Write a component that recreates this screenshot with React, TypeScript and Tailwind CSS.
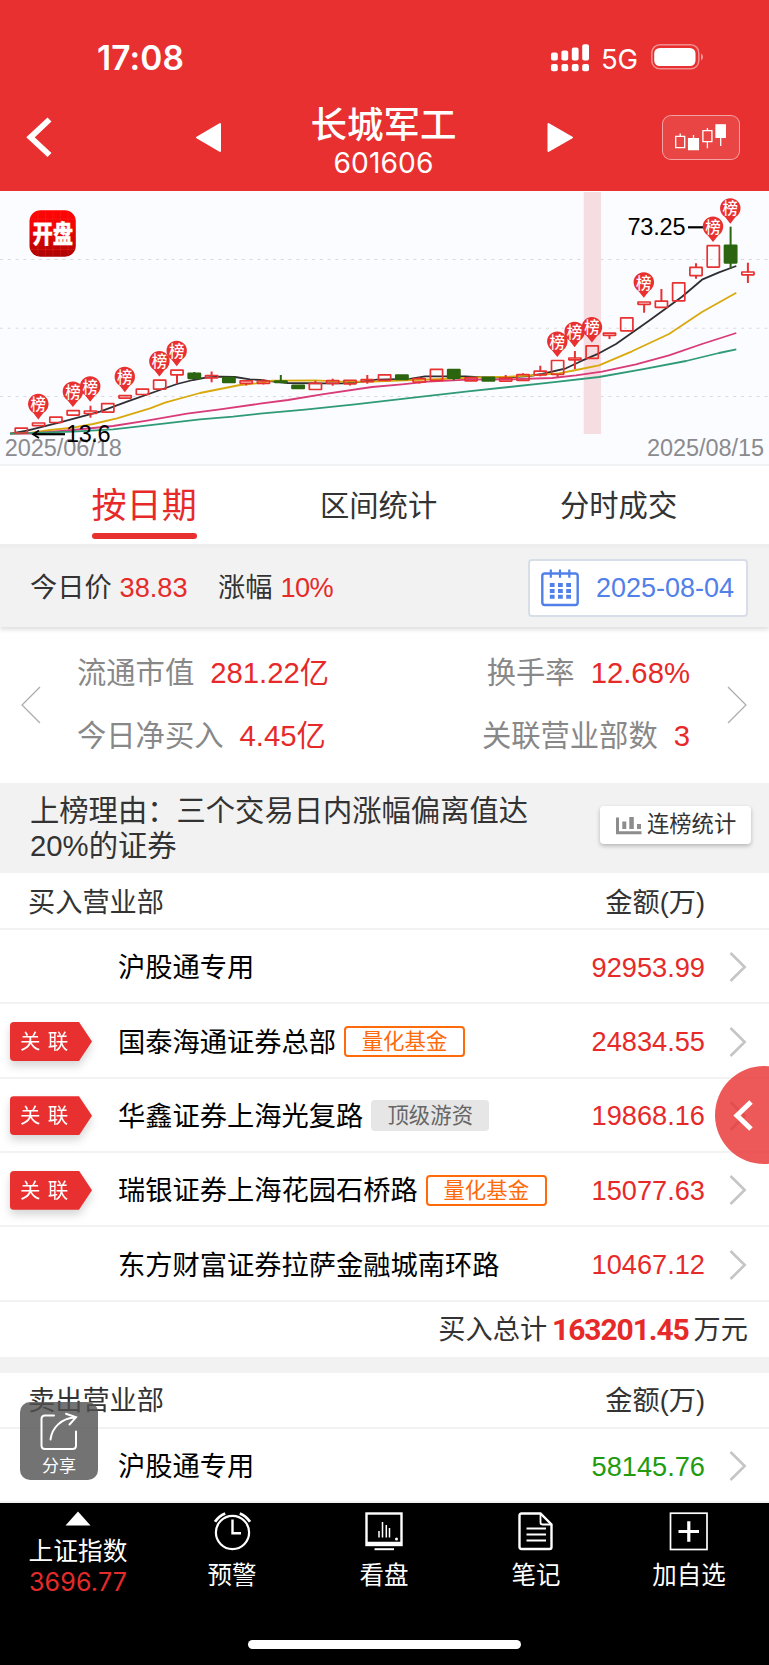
import React from 'react';

type Candle = { k: 'r' | 'g'; t: number; b: number; hi?: number; lo?: number };

const candleX = (i: number) => 21.3 + 17.3 * i;

const CANDLES: Candle[] = [
  { k: 'r', t: 427.5, b: 433.7 },
  { k: 'r', t: 422.3, b: 426.3 },
  { k: 'r', t: 416.5, b: 423.2 },
  { k: 'r', t: 410, b: 415.8 },
  { k: 'r', t: 410.3, b: 414.2, hi: 405.7, lo: 417.7 },
  { k: 'r', t: 403, b: 412.8 },
  { k: 'r', t: 395, b: 398.8 },
  { k: 'r', t: 388.5, b: 395.2 },
  { k: 'r', t: 379.5, b: 389.8 },
  { k: 'r', t: 369.5, b: 375.5, lo: 383.5 },
  { k: 'g', t: 372.7, b: 379, hi: 372 },
  { k: 'r', t: 374.8, b: 378.5, hi: 371.5, lo: 382.3 },
  { k: 'g', t: 377, b: 383.2 },
  { k: 'r', t: 380.2, b: 384, lo: 385.5 },
  { k: 'r', t: 380.3, b: 384, hi: 379, lo: 384.5 },
  { k: 'g', t: 380.3, b: 383, hi: 375 },
  { k: 'g', t: 384.7, b: 389.2 },
  { k: 'r', t: 382.6, b: 390.2, hi: 380.8 },
  { k: 'r', t: 380, b: 384, hi: 378.7, lo: 385.7 },
  { k: 'r', t: 379.7, b: 384.5, lo: 385.5 },
  { k: 'r', t: 378.8, b: 382.3, hi: 375, lo: 383.7 },
  { k: 'r', t: 374.2, b: 381 },
  { k: 'g', t: 374.3, b: 380 },
  { k: 'r', t: 378, b: 382.7, hi: 377.3, lo: 383.5 },
  { k: 'r', t: 368.6, b: 381 },
  { k: 'g', t: 369, b: 378.8, lo: 380.2 },
  { k: 'r', t: 377.2, b: 381.5 },
  { k: 'g', t: 376.7, b: 381.7 },
  { k: 'r', t: 377.5, b: 381.8, hi: 375 },
  { k: 'r', t: 374, b: 381, hi: 373.3 },
  { k: 'r', t: 370.5, b: 375.5, hi: 365.7, lo: 376.3 },
  { k: 'r', t: 359.8, b: 375, lo: 377 },
  { k: 'r', t: 357.3, b: 360.5, hi: 351, lo: 369 },
  { k: 'r', t: 345.2, b: 359 },
  { k: 'r', t: 332.5, b: 336, lo: 339 },
  { k: 'r', t: 317.2, b: 331.5 },
  { k: 'r', t: 301.3, b: 305, lo: 312.7 },
  { k: 'r', t: 300.5, b: 308, hi: 289 },
  { k: 'r', t: 282.2, b: 301.5 },
  { k: 'r', t: 266.6, b: 276.3, hi: 263.3, lo: 278.7 },
  { k: 'r', t: 245, b: 267.8 },
  { k: 'g', t: 244.7, b: 263.5, hi: 226.7, lo: 268.5 },
  { k: 'r', t: 271.3, b: 275.5, hi: 262.7, lo: 283 },
];

const PINS: [number, number][] = [
  [1, 404.6], [3, 392.2], [4, 387], [6, 377.4], [8, 361.8], [9, 351.4],
  [31, 342.2], [32, 332.4], [33, 327.8], [36, 283], [40, 227.2], [41, 208.9],
];

const MA5 =
  '10,433.7 27,430.7 60,422.3 100,411.7 127,401.7 160,390 177,384 193,380 207,377.3 220,376.7 235,377 250,379.3 260,380 272,381.3 288,383 322,383.3 342,383.3 355,382.3 377,379.7 410,379 425,376.3 445,376.3 465,376.3 488,377.7 509,377.3 529,376 542,374 566,368.3 582,360.7 599,353.3 616,344 649,320.7 682,296.7 702,279.7 719,272.3 736.3,266';
const MA10 =
  '10,433.7 30,433 50,430 73,427.7 93,424 117,418.3 150,408.3 165,402.7 200,393 240,385 260,383 272,380.7 315,380.3 342,381.7 372,381.7 405,380.3 442,379 472,377.7 509,376.7 529,375.7 559,373.3 576,370 599,365.3 632,351.3 669,334 702,312 736.3,292.7';
const MA20 =
  '10,433.7 30,433.7 73,430 113,426 147,420.7 187,413.7 220,409.3 260,403.7 288,400 322,394.3 372,387 402,384.3 428,381.7 468,379.7 509,379.3 552,378 576,375.3 602,371.7 636,364.3 669,355.3 702,344 736.3,333';
const MA30 =
  '10,433.7 73,431.7 113,429.3 157,424.3 200,419.3 233,416.7 260,413.7 305,409.7 355,404.3 422,396.7 468,391.3 509,387 552,382.3 599,377 642,369.3 686,361 719,353 736.3,349.3';

function CandleMark({ c, i }: { c: Candle; i: number }) {
  const x = candleX(i);
  const color = c.k === 'r' ? '#e83131' : '#2b650f';
  return (
    <g stroke={color} strokeWidth={2}>
      {c.hi !== undefined && <line x1={x} x2={x} y1={c.hi} y2={c.t + 1} />}
      {c.lo !== undefined && <line x1={x} x2={x} y1={c.b - 1} y2={c.lo} />}
      <rect
        x={x - 6.1}
        y={c.t + 0.7}
        width={12.2}
        height={Math.max(c.b - c.t - 1.4, 0.6)}
        strokeWidth={1.7}
        rx={0.3}
        fill={c.k === 'g' ? color : 'none'}
      />
    </g>
  );
}

function Chart() {
  return (
    <svg viewBox="0 191 769 273" width="769" height="273" className="block bg-[#fbfcff]">
      <defs>
        <linearGradient id="logo" x1="0" y1="0" x2="0" y2="1">
          <stop offset="0" stopColor="#ff0505" />
          <stop offset="0.35" stopColor="#f20505" />
          <stop offset="1" stopColor="#ac0303" />
        </linearGradient>
      </defs>
      <g stroke="#d9dade" strokeWidth="1" strokeDasharray="3 4.8">
        <line x1="0" x2="769" y1="259.5" y2="259.5" />
        <line x1="0" x2="769" y1="328.2" y2="328.2" />
        <line x1="0" x2="769" y1="396.5" y2="396.5" />
      </g>
      <rect x="583.7" y="192" width="17.3" height="242" fill="#f6dde2" />
      <g fontFamily="Liberation Sans, Arial, sans-serif" fontSize="23.5" fill="#8b8b8e">
        <text x="4.8" y="456" textLength="117">2025/06/18</text>
        <text x="647" y="456" textLength="117">2025/08/15</text>
      </g>
      <g fill="none" strokeWidth="1.8" strokeLinejoin="round">
        <polyline points={MA5} stroke="#2f2f33" />
        <polyline points={MA10} stroke="#d9a90c" />
        <polyline points={MA20} stroke="#d93a78" />
        <polyline points={MA30} stroke="#2f9a76" />
      </g>
      {CANDLES.map((c, i) => (
        <CandleMark key={i} c={c} i={i} />
      ))}
      <g fontFamily="Liberation Sans, Arial, sans-serif" fontSize="23.5" fill="#000">
        <text x="66" y="442" textLength="44.5">13.6</text>
        <text x="627.5" y="235" textLength="58">73.25</text>
      </g>
      <g stroke="#000" strokeWidth="2.2" fill="none">
        <line x1="34" x2="65" y1="434.2" y2="434.2" />
        <line x1="688" x2="704" y1="227.3" y2="227.3" />
        <path d="M39 430.5 L33 434.2 L39 438" strokeWidth="1.8" />
      </g>
      {PINS.map(([i, y]) => (
        <g key={i}>
          <path
            d={`M${candleX(i) - 0.3} ${y + 14.8} L${candleX(i) - 5.5} ${y + 8.2} A10.2 10.2 0 1 1 ${candleX(i) + 4.9} ${y + 8.2} Z`}
            fill="#e83030"
          />
          <text
            x={candleX(i) - 0.3}
            y={y + 5.5}
            fontSize="15.5"
            fontWeight="500"
            textAnchor="middle"
            fill="#fff"
            fontFamily="Noto Sans CJK SC, sans-serif"
          >
            榜
          </text>
        </g>
      ))}
      <rect x="29.5" y="210.3" width="46.3" height="46.5" rx="11" fill="url(#logo)" />
      <g stroke="#ff5a4a" strokeOpacity="0.22" strokeWidth="0.8">
        <path d="M38 211V256M45.5 211V256M53 211V256M60.5 211V256M68 211V256M30 219H75.5M30 249.5H75.5" />
      </g>
      <text
        transform="translate(52.7 243.3) scale(0.83 1)"
        fontSize="24.5"
        fontWeight="900"
        textAnchor="middle"
        fill="#fff"
        stroke="#fff"
        strokeWidth="0.3"
        fontFamily="Noto Sans CJK SC, sans-serif"
      >
        开盘
      </text>
    </svg>
  );
}

function StatusBar() {
  return (
    <div className="flex h-[95px] items-start pl-[97px] pt-[37px] text-white">
      <span className="w-[454px] pt-[1px] font-['Inter'] text-[33.5px] leading-[40px] font-semibold tracking-[0.1px]">17:08</span>
      <svg width="38" height="28" viewBox="0 0 38 28" fill="#fff" className="mt-[6.5px]">
        <rect x="0" y="8.5" width="6.8" height="8" rx="2" />
        <rect x="10.4" y="6.5" width="6.8" height="10" rx="2" />
        <rect x="20.8" y="3.5" width="6.8" height="13" rx="2" />
        <rect x="31.2" y="0.3" width="6.8" height="16.2" rx="2" />
        <rect x="0" y="20" width="6.8" height="7.2" rx="2" />
        <rect x="10.4" y="20" width="6.8" height="7.2" rx="2" />
        <rect x="20.8" y="20" width="6.8" height="7.2" rx="2" />
        <rect x="31.2" y="20" width="6.8" height="7.2" rx="2" />
      </svg>
      <span className="ml-[12px] w-[50px] pt-px font-['Inter'] text-[27.5px] leading-[43px] tracking-[-0.2px]">5G</span>
      <svg width="54" height="26" viewBox="0 0 54 26" className="mt-[7px]">
        <rect x="0.8" y="0.8" width="47" height="24" rx="8" fill="none" stroke="#fff" strokeOpacity="0.45" strokeWidth="1.5" />
        <rect x="3.2" y="4" width="41.3" height="18" rx="5.5" fill="#fff" />
        <path d="M50 9.5a4 4 0 0 1 0 7z" fill="#fff" fillOpacity="0.5" />
      </svg>
    </div>
  );
}

function NavBar() {
  return (
    <div className="flex h-[96px] items-start text-white">
      <svg width="311" height="80" viewBox="0 95 311 80">
        <path d="M49.5 119.5 L30.5 137.3 L49.5 155" fill="none" stroke="#fff" strokeWidth="5.8" />
        <path d="M197 137.5 L220 124 V151 Z" fill="#fff" stroke="#fff" strokeWidth="2" strokeLinejoin="round" />
      </svg>
      <div className="flex w-[145px] flex-col items-center pt-[7px]">
        <h1 className="text-[36.5px] leading-[48px] font-medium whitespace-nowrap">长城军工</h1>
        <span className="mt-[-1px] font-['Inter'] text-[28.2px] leading-[28px] tracking-[0.1px]">601606</span>
      </div>
      <svg width="205" height="80" viewBox="456 95 205 80">
        <path d="M572 137.500 L548.5 124 V151 Z" fill="#fff" stroke="#fff" strokeWidth="2" strokeLinejoin="round" />
      </svg>
      <div className="mt-[20px] ml-[1px] h-[45px] w-[77.5px] rounded-[9px] border border-white/50 bg-white/10">
        <svg width="75" height="43" viewBox="663 116 75 43" fill="none" stroke="#fff" strokeWidth="1.3">
          <path d="M675.7 136.3h9v11.3h-9zM680.2 133.5v2.8" />
          <path d="M688.6 138.6h9.8v11h-9.8z" fill="#fff" />
          <path d="M693.5 135v4" />
          <path d="M702.9 130.6h9v11h-9zM707.4 128v2.6M707.4 141.6v6.6" />
          <path d="M716 124.8h9.3v12.5h-9.3z" fill="#fff" />
          <path d="M720.7 137v9" />
        </svg>
      </div>
    </div>
  );
}

function Tabs() {
  return (
    <div className="flex h-[78px] items-start bg-white text-[#333]">
      <div className="ml-[91.5px] flex h-[73px] w-[105.5px] flex-col justify-between">
        <span className="h-[60px] text-[35.1px] leading-[79px] whitespace-nowrap text-[#e62a2a]">按日期</span>
        <span className="h-[6px] rounded-full bg-[#e83030]" />
      </div>
      <span className="ml-[123px] w-[240px] text-[29.3px] leading-[79px]">区间统计</span>
      <span className="text-[29.3px] leading-[79px]">分时成交</span>
    </div>
  );
}

function DateBox() {
  return (
    <div className="flex h-[58px] w-[220px] items-center rounded-[4px] border-2 border-[#d8dee8] bg-white pl-[11px] text-[#5280e9]">
      <svg width="38" height="38" viewBox="0 0 38 38" fill="none" stroke="currentColor">
        <rect x="1.3" y="4.5" width="35.4" height="31.5" rx="2.5" strokeWidth="2.4" />
        <path d="M9.8 0.5v8.2M19 0.5v8.2M28.3 0.5v8.2" strokeWidth="2.2" />
        <path d="M8.8 16.1h21.5M8.8 21.9h21.5M8.8 27.7h21.5" strokeWidth="4" strokeDasharray="4.8 3.4" />
      </svg>
      <span className="ml-[17px] pt-[1px] text-[27px] leading-[50px]">2025-08-04</span>
    </div>
  );
}

function PriceBar() {
  return (
    <div className="relative flex h-[83px] items-center justify-between border-t-4 border-[#eeeeee] bg-[#f2f2f2] pr-[21px] pl-[30px] text-[27.2px] text-[#333] shadow-[0_3px_4px_rgba(0,0,0,0.12)]">
      <div className="flex pt-[2px]">
        <span>今日价</span>
        <span className="ml-[8px] w-[98.5px] text-[#e62a2a]">38.83</span>
        <span>涨幅</span>
        <span className="ml-[8px] text-[#e62a2a] tracking-[-0.6px]">10%</span>
      </div>
      <DateBox />
    </div>
  );
}

function Stat({ label, value }: { label: string; value: string }) {
  return (
    <div className="flex gap-[16px]">
      <span className="text-[#888]">{label}</span>
      <span className="text-[#e62a2a]">{value}</span>
    </div>
  );
}

function Stats() {
  return (
    <div className="flex h-[156px] items-start bg-white pt-[14px] text-[29.3px] leading-[63px]">
      <svg width="77" height="126" viewBox="0 641 77 126" fill="none" stroke="#aaa" strokeWidth="1.2">
        <path d="M40 687 L22 705 L40 723" />
      </svg>
      <div className="flex w-[613px] justify-between whitespace-nowrap">
        <div>
          <Stat label="流通市值" value="281.22亿" />
          <Stat label="今日净买入" value="4.45亿" />
        </div>
        <div className="flex flex-col items-end">
          <Stat label="换手率" value="12.68%" />
          <Stat label="关联营业部数" value="3" />
        </div>
      </div>
      <svg width="79" height="126" viewBox="690 641 79 126" fill="none" stroke="#aaa" strokeWidth="1.2">
        <path d="M728 687 L746 705 L728 723" />
      </svg>
    </div>
  );
}

function Reason() {
  return (
    <div className="flex h-[90px] items-start justify-between bg-[#f2f2f2] pt-[10px] pr-[18px] pl-[30px] text-[#333]">
      <p className="w-[520px] text-[29.3px] leading-[35px]">
        上榜理由：三个交易日内涨幅偏离值达
        <br />
        20%的证券
      </p>
      <button className="mt-[13px] flex h-[38px] w-[151px] items-center rounded-[4px] bg-white pl-[16px] text-[22.3px] leading-[34px] whitespace-nowrap shadow-[0_2px_4px_rgba(0,0,0,0.25)]">
        <svg width="26" height="19" viewBox="0 0 26 19" fill="#8d8d8d" className="mr-[5px]">
          <path d="M0 1.5h3v13.8h22.5v2.9H0z" />
          <path d="M6.3 5.5h4v7.5h-4zM13.3 1h4.5v12h-4.5zM21 8h4v5h-4z" />
        </svg>
        连榜统计
      </button>
    </div>
  );
}

function TableHead({ title }: { title: string }) {
  return (
    <div className="flex h-[56px] shrink-0 items-center justify-between border-b-2 border-[#f2f2f2] bg-white pt-[3px] pr-[64px] pl-[28px] text-[27.2px] leading-[50px] text-[#333]">
      <span>{title}</span>
      <span>金额(万)</span>
    </div>
  );
}

type RowProps = { name: string; amount: string; linked?: boolean; chip?: 'quant' | 'top'; green?: boolean };

function Row({ name, amount, linked, chip, green }: RowProps) {
  return (
    <div className="flex h-[74.35px] shrink-0 items-center border-b-2 border-[#f2f2f2] bg-white pt-[2px]">
      <div className="w-[118px] pl-[10px]">
        {linked && (
          <div className="w-[82px] drop-shadow-[0_5px_4px_rgba(0,0,0,0.16)]">
            <div className="h-[39px] rounded-l-[4px] bg-[#e83030] pl-[10px] text-[20.5px] leading-[40px] tracking-[0.2px] whitespace-pre text-white [clip-path:polygon(0_0,69px_0,82px_50%,69px_100%,0_100%)]">
              关<span className="ml-[7px]">联</span>
            </div>
          </div>
        )}
      </div>
      <span className="pt-[3px] text-[27.25px] whitespace-nowrap text-black">{name}</span>
      {chip === 'quant' && (
        <span className="ml-[8px] h-[31px] w-[121px] rounded-[4px] border-2 border-[#ff6a0a] text-center text-[21.4px] leading-[29px] text-[#ff6a0a]">
          量化基金
        </span>
      )}
      {chip === 'top' && (
        <span className="ml-[8px] h-[31px] w-[118px] rounded-[4px] bg-[#e6e6e6] text-center text-[21.4px] leading-[32px] text-[#666]">
          顶级游资
        </span>
      )}
      <span className={green ? 'ml-auto pt-[2px] text-[27.2px] text-[#239b0f]' : 'ml-auto pt-[2px] text-[27.2px] text-[#e62a2a]'}>
        {amount}
      </span>
      <svg width="64" height="32" viewBox="705 0 64 32" fill="none" stroke="#c5c5c5" strokeWidth="2.6">
        <path d="M730.5 2 L744.7 16 L730.5 30" />
      </svg>
    </div>
  );
}

function TabItem({ label, width, children }: { label: string; width: string; children: React.ReactNode }) {
  return (
    <div className={`flex flex-col items-center pt-[8px] ${width}`}>
      <svg width="40" height="40" viewBox="0 0 40 40" fill="none" stroke="#fff" strokeWidth="1.8">
        {children}
      </svg>
      <span className="mt-[7px] text-[24.5px] leading-[36px]">{label}</span>
    </div>
  );
}

function BottomBar() {
  return (
    <div className="relative flex h-[162px] shrink-0 bg-black text-white">
      <div className="flex w-[156px] flex-col items-center pt-[8px]">
        <svg width="26" height="15" viewBox="0 0 26 15" fill="#fff">
          <path d="M13 0.5 L25.5 14.5 H0.5 Z" />
        </svg>
        <span className="mt-[8px] text-[24.7px] leading-[36px]">上证指数</span>
        <span className="mt-[-2px] font-['Inter'] text-[25px] leading-[28px] tracking-[0.2px] text-[#e62a2a]">3696.77</span>
      </div>
      <TabItem label="预警" width="w-[152px]">
        <circle cx="20.5" cy="21.5" r="16.6" strokeWidth="2.2" />
        <path d="M20.5 8.5V22.2h8.5" strokeWidth="2.4" />
        <path d="M3 10.800 Q7 5 13.2 2.5M27.8 2.5 Q34 5 38 10.8" strokeWidth="2.8" />
      </TabItem>
      <TabItem label="看盘" width="w-[152px]">
        <rect x="2.5" y="2.5" width="35" height="31.5" strokeWidth="2.4" />
        <path d="M2 32.5h36" strokeWidth="3.6" />
        <path d="M10.5 38.2h19.5" strokeWidth="2" />
        <path d="M15 20v6.5M18.5 11v15.5M22.3 14v12.5M25.5 17v9.5" strokeWidth="1.5" />
        <circle cx="32.5" cy="28" r="1.5" fill="#fff" stroke="none" />
      </TabItem>
      <TabItem label="笔记" width="w-[152px]">
        <path d="M5.5 2.5 H24.5 L35.5 13.5 V36 Q35.5 38 33.5 38 H5.5 Q3.5 38 3.5 36 V4.5 Q3.5 2.5 5.5 2.5 Z" strokeWidth="2.4" />
        <path d="M24.5 2.5 V11.5 Q24.5 13.5 26.5 13.5 H35" />
        <path d="M10.5 17.5h19.5M10.5 23.5h19.5M10.5 29.5h19.5" />
      </TabItem>
      <TabItem label="加自选" width="w-[154px]">
        <rect x="1.5" y="2.2" width="36.5" height="36.3" strokeWidth="1.7" />
        <path d="M9.5 20.5h20.5M19.8 10.3v20.5" strokeWidth="3.2" />
      </TabItem>
      <div className="absolute bottom-[15.5px] left-[247.5px] h-[9.5px] w-[273.5px] rounded-full bg-white" />
    </div>
  );
}

export default function App() {
  return (
    <div className="relative flex h-[1665px] w-[769px] flex-col overflow-hidden bg-white font-['Liberation_Sans','Noto_Sans_CJK_SC',sans-serif]">
      <header className="h-[191px] shrink-0 bg-[#e83030]">
        <StatusBar />
        <NavBar />
      </header>
      <div className="h-[275px] shrink-0 border-b-2 border-[#f2f3f4]">
        <Chart />
      </div>
      <Tabs />
      <PriceBar />
      <Stats />
      <Reason />
      <div className="h-px shrink-0 bg-white" />
      <TableHead title="买入营业部" />
      <Row name="沪股通专用" amount="92953.99" />
      <Row name="国泰海通证券总部" amount="24834.55" linked chip="quant" />
      <Row name="华鑫证券上海光复路" amount="19868.16" linked chip="top" />
      <Row name="瑞银证券上海花园石桥路" amount="15077.63" linked chip="quant" />
      <Row name="东方财富证券拉萨金融城南环路" amount="10467.12" />
      <div className="flex h-[55.25px] shrink-0 items-center justify-end bg-white pt-[2px] pr-[21px] text-[27.2px] leading-[50px] text-[#333]">
        <span>买入总计</span>
        <span className="mx-[5px] font-['Roboto'] text-[30px] font-bold tracking-[-1.1px] text-[#e62a2a]">163201.45</span>
        <span>万元</span>
      </div>
      <div className="h-[16px] shrink-0 bg-[#f2f2f2]" />
      <TableHead title="卖出营业部" />
      <div className="h-[74px] shrink-0 overflow-hidden">
        <Row name="沪股通专用" amount="58145.76" green />
      </div>
      <BottomBar />

      <div className="absolute top-[1066px] right-0 h-[98px] w-[54px] overflow-hidden">
        <div className="h-[98px] w-[98px] rounded-full bg-[#e83030]/80" />
        <svg width="54" height="98" viewBox="715 1066 54 98" className="absolute top-0 left-0" fill="none" stroke="#fff" strokeWidth="5">
          <path d="M751 1102 L737 1115.5 L751 1129" />
        </svg>
      </div>

      <div className="absolute top-[1402px] left-[20px] flex h-[78px] w-[78px] flex-col items-center rounded-[10px] bg-[#505050]/80 pt-[10px] text-white">
        <svg width="40" height="40" viewBox="0 0 40 40" fill="none" stroke="#fff" strokeWidth="2" strokeLinecap="round">
          <path d="M15 3.5 H6 Q2.5 3.5 2.5 7 V33.5 Q2.5 37 6 37 H33.5 Q37 37 37 33.5 V19.5" />
          <path d="M11.5 27.5 C13 16 22 6 36.5 5.5M27 1.8 L37 5.3 L30.5 12.5" />
        </svg>
        <span className="mt-[2px] text-[17px] leading-[26px]">分享</span>
      </div>
    </div>
  );
}
